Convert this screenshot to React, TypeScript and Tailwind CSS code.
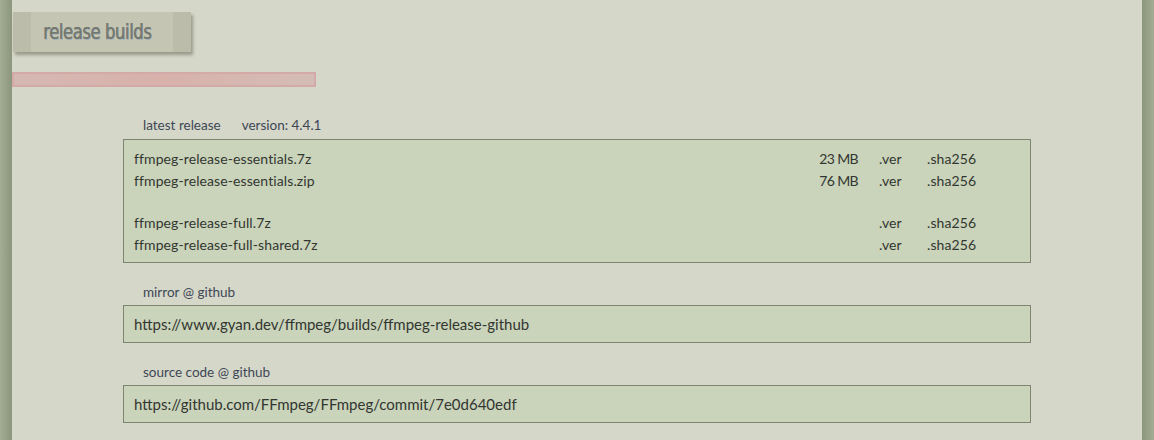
import React from 'react';

const files = [
  { name: 'ffmpeg-release-essentials.7z', size: '23 MB' },
  { name: 'ffmpeg-release-essentials.zip', size: '76 MB' },
  null,
  { name: 'ffmpeg-release-full.7z', size: '' },
  { name: 'ffmpeg-release-full-shared.7z', size: '' },
];

function Label({ children }: { children: React.ReactNode }) {
  return <div className="pl-[20px] text-[13.5px] leading-[16px] text-[#3e4756]">{children}</div>;
}

export default function App() {
  return (
    <div className="flex h-[440px] w-[1154px] overflow-hidden bg-[#d5d7c9] font-['Lato','Liberation_Sans',sans-serif]">
      <div className="w-[12px] shrink-0 bg-gradient-to-r from-[#a3ad94] to-[#8c967d]" />
      <div className="flex-1 bg-[#d5d7c9]">
        <div className="pt-[12px]">
          <div className="flex h-[40px] w-[178px] ml-[1px] bg-[#bbbdaa] shadow-[2px_3px_3px_rgba(80,80,60,0.45)]">
            <div className="w-[18px]" />
            <div className="flex w-[142px] items-center bg-[#c4c5b3] pl-[12px] pb-[1px]">
              <span className="inline-block origin-left [transform:scaleX(0.75)] whitespace-nowrap font-['DejaVu_Sans',sans-serif] text-[22px] leading-none text-[#75786c] tracking-[-0.6px] [text-shadow:1px_1px_0_rgba(120,150,190,0.45),0.6px_0_0_#75786c]">
                release builds
              </span>
            </div>
          </div>
        </div>
        <div className="mt-[20px] h-[15px] w-[304px] border-2 border-[#d3aaa7] bg-gradient-to-r from-[#d6b8b3] via-[#d8b1ab] to-[#d4bdb6]" />
        <div className="ml-[111px] mt-[30px] w-[908px]">
          <Label>
            latest release<span className="ml-[21px]">version: 4.4.1</span>
          </Label>
          <div className="mt-[6px] border border-[#7d8571] bg-[#c9d4bb] pl-[10px] pt-[7px] pb-[7px] text-[14px] text-[#333630] tracking-[0.1px]">
            {files.map((f, i) =>
              f ? (
                <div key={i} className="flex h-[22px] items-center">
                  <span className="flex-1">{f.name}</span>
                  <span className="w-[80px] text-right tracking-[-0.6px]">{f.size}</span>
                  <span className="ml-[21px] w-[48px]">.ver</span>
                  <span className="w-[103px]">.sha256</span>
                </div>
              ) : (
                <div key={i} className="h-[20px]" />
              )
            )}
          </div>
          <div className="mt-[21px]">
            <Label>mirror @ github</Label>
          </div>
          <div className="mt-[5px] flex h-[38px] items-center border border-[#7d8571] bg-[#c9d4bb] pl-[10px] text-[15px] text-[#333630]">
            https://www.gyan.dev/ffmpeg/builds/ffmpeg-release-github
          </div>
          <div className="mt-[21px]">
            <Label>source code @ github</Label>
          </div>
          <div className="mt-[5px] flex h-[38px] items-center border border-[#7d8571] bg-[#c9d4bb] pl-[10px] text-[15px] text-[#333630]">
            https://github.com/FFmpeg/FFmpeg/commit/7e0d640edf
          </div>
        </div>
      </div>
      <div className="w-[12px] shrink-0 bg-gradient-to-r from-[#8c967d] to-[#a3ad94]" />
    </div>
  );
}
